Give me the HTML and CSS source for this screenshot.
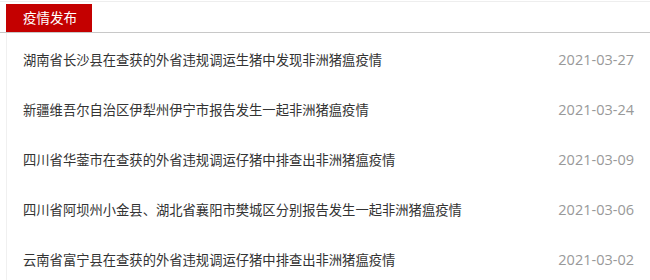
FILE: index.html
```html
<!DOCTYPE html>
<html lang="zh-CN">

<head>
    <meta charset="UTF-8">
    <title>疫情发布</title>
    <link rel="stylesheet" href="styles.css">
</head>

<body>
    <div class="news-box">
        <div class="news-head">
            <span class="news-tab">疫情发布</span>
        </div>
        <ul class="news-list">
            <li><a href="#">湖南省长沙县在查获的外省违规调运生猪中发现非洲猪瘟疫情</a><span class="date">2021-03-27</span></li>
            <li><a href="#">新疆维吾尔自治区伊犁州伊宁市报告发生一起非洲猪瘟疫情</a><span class="date">2021-03-24</span></li>
            <li><a href="#">四川省华蓥市在查获的外省违规调运仔猪中排查出非洲猪瘟疫情</a><span class="date">2021-03-09</span></li>
            <li><a href="#">四川省阿坝州小金县、湖北省襄阳市樊城区分别报告发生一起非洲猪瘟疫情</a><span class="date">2021-03-06</span></li>
            <li><a href="#">云南省富宁县在查获的外省违规调运仔猪中排查出非洲猪瘟疫情</a><span class="date">2021-03-02</span></li>
        </ul>
    </div>
</body>

</html>
```

FILE: styles.css
```css
body {
    margin: 0;
    background-color: #fff;
    font-family: "Open Sans", "Noto Sans CJK SC", sans-serif;
    overflow: hidden;
}

.news-box {
    border-top: 1px solid #eee;
    margin-top: 1px;
}

.news-head {
    height: 28px;
    padding-top: 2px;
    padding-left: 6px;
    border-bottom: 1px solid #c8c8c8;
    display: flex;
}

.news-tab {
    width: 86px;
    box-sizing: border-box;
    padding-left: 17px;
    background-color: #c40000;
    color: #fff;
    font-size: 13.5px;
    line-height: 28px;
}

.news-list {
    list-style: none;
    margin: 0 0 0 6px;
    padding: 1px 16px 0 16px;
    border-left: 1px solid #f0f0f0;
}

.news-list li {
    display: flex;
    justify-content: space-between;
    align-items: center;
    height: 50px;
}

.news-list a {
    color: #333;
    font-size: 13.3px;
    text-decoration: none;
}

.date {
    color: #999;
    font-size: 14.5px;
}
```
